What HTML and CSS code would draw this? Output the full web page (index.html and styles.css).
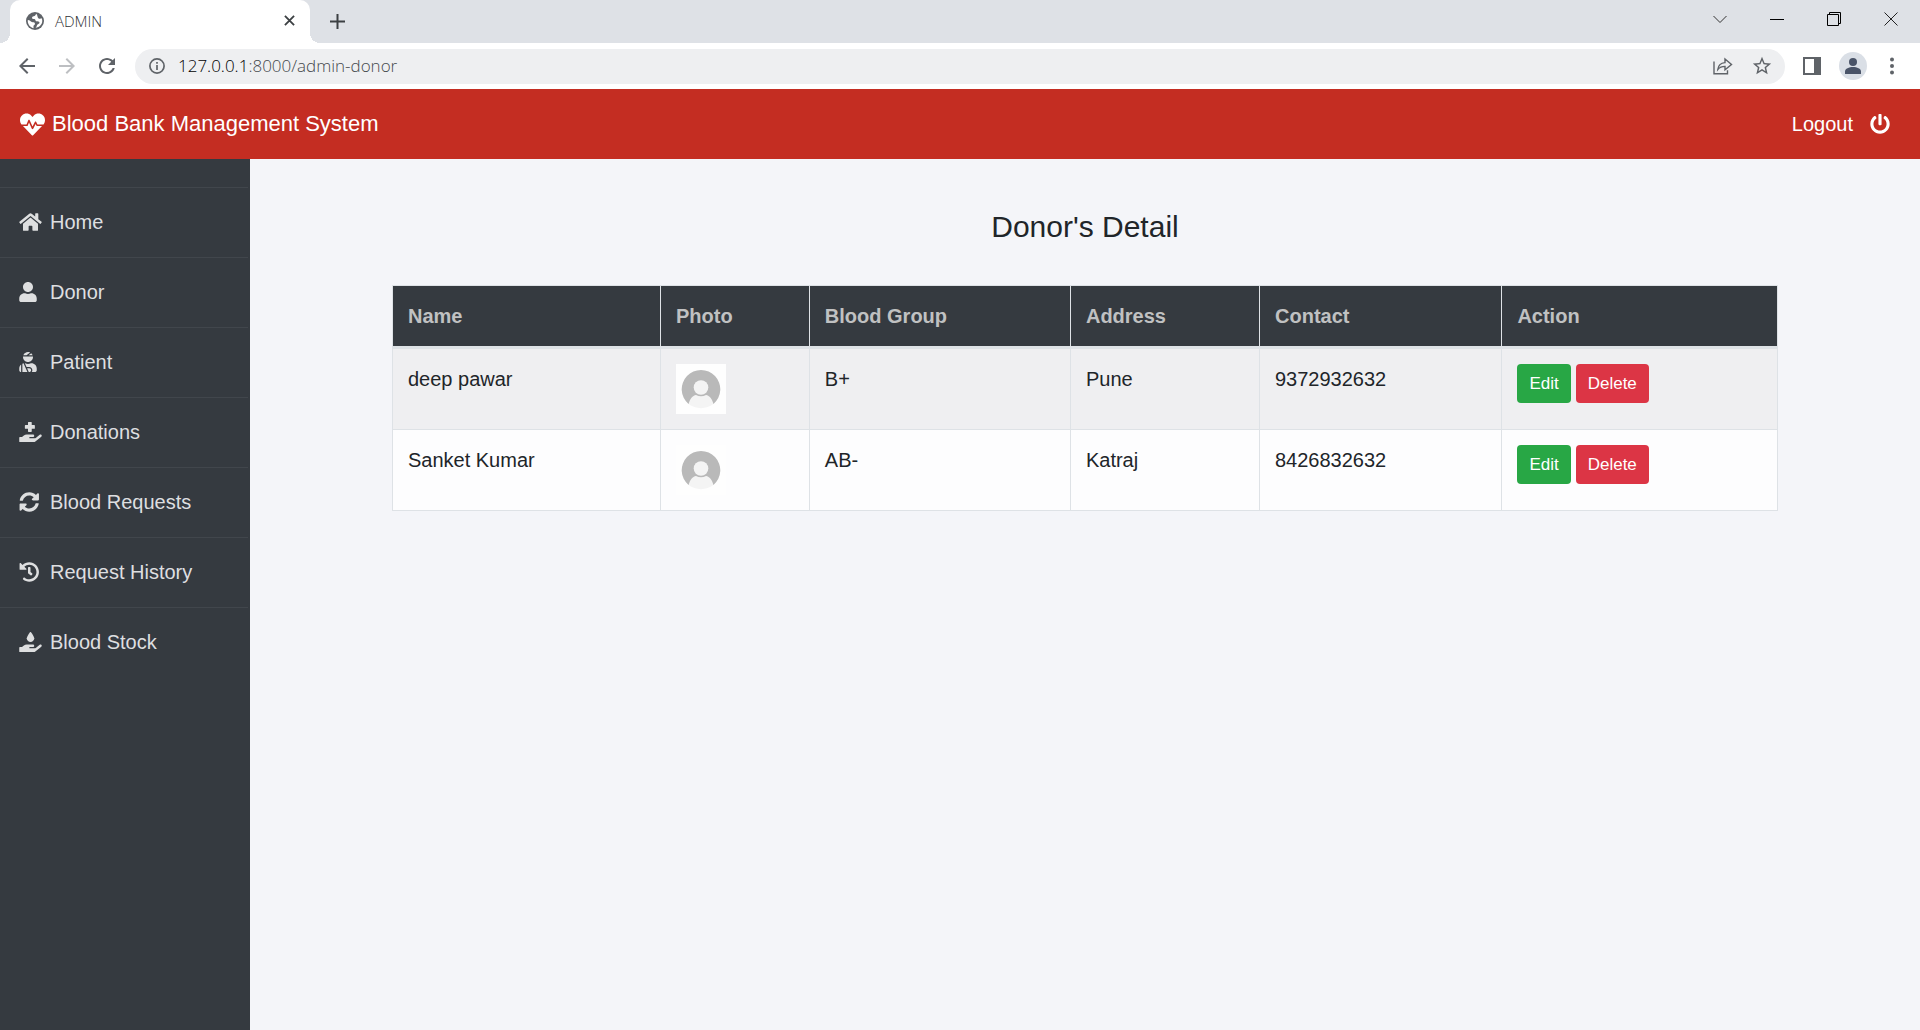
FILE: index.html
```html
<!DOCTYPE html>
<html lang="en">
<head>
<meta charset="utf-8">
<meta name="viewport" content="width=device-width, initial-scale=1">
<title>ADMIN</title>
<link rel="stylesheet" href="styles.css">
</head>
<body>
<div class="browser">
  <div class="tabstrip">
    <div class="tab">
      <svg class="tab-globe" viewBox="0 0 24 24"><circle cx="12" cy="12" r="12" fill="#5f6368"/><path fill="#fff" d="M13.500 2.300c-.8 1.300-.6 2.300-2.100 3-1.600.7-3.200.6-3.400 2.300-.2 1.500 1.500 1.500 3 1.800 1.800.3 1.200 2.300 2.700 2.900 1.800.7 4-.3 4.300 1.800.2 1.500-2 1.700-3 3-.9 1.200-.4 3-2.300 3.900 5-.1 9-4.100 9-9.200 0-1.200-.3-2.300-.8-3.400-1.300.7-2.900.8-4.100.1-1.900-1.200-1-4.700-3.300-6.200zM2.400 10.700c-.6 5.200 2.700 9.800 7.600 10.800.3-1.600-.5-2.700.6-3.800.8-.9 1.700-1.300 1.200-2.800-.5-1.400-2.400-.8-4-1.500-1.700-.7-2.700-2.700-5.400-2.700z"/></svg>
      <span class="tab-title">ADMIN</span>
      <button class="icon-btn" aria-label="Close tab"><svg class="i-close" viewBox="0 0 12 12"><path d="M1 1l10 10M11 1L1 11" stroke="#3c4043" stroke-width="2"/></svg></button>
    </div>
    <button class="icon-btn new-tab" aria-label="New tab"><svg class="i-plus" viewBox="0 0 15 15"><path d="M7.500 0v15M0 7.500h15" stroke="#3c4043" stroke-width="2"/></svg></button>
    <div class="window-controls">
      <button class="icon-btn" aria-label="Search tabs"><svg class="i-win" viewBox="0 0 14 14"><path d="M.5 4l6.500 6.500L13.500 4" fill="none" stroke="#333"/></svg></button>
      <button class="icon-btn" aria-label="Minimize"><svg class="i-win" viewBox="0 0 14 14"><path d="M0 7.500h14" stroke="#000"/></svg></button>
      <button class="icon-btn" aria-label="Restore"><svg class="i-win" viewBox="0 0 14 14"><path d="M.5 2.500h11v11H.5zM2.500 2.500v-2h11v11h-2" fill="none" stroke="#000"/></svg></button>
      <button class="icon-btn" aria-label="Close window"><svg class="i-win" viewBox="0 0 14 14"><path d="M.5.5l13 13M13.500.5l-13 13" stroke="#222"/></svg></button>
    </div>
  </div>
  <div class="toolbar">
    <button class="icon-btn" aria-label="Back"><svg class="i-nav" viewBox="0 0 24 24"><path fill="#5f6368" d="M20 11H7.830l5.590-5.590L12 4l-8 8 8 8 1.410-1.410L7.830 13H20v-2z"/></svg></button>
    <button class="icon-btn" aria-label="Forward"><svg class="i-nav" viewBox="0 0 24 24"><path fill="#bdbfc2" d="M12 4l-1.410 1.410L16.170 11H4v2h12.170l-5.580 5.590L12 20l8-8z"/></svg></button>
    <button class="icon-btn" aria-label="Reload"><svg class="i-nav" viewBox="0 0 24 24"><path fill="#5f6368" d="M17.650 6.350C16.200 4.900 14.210 4 12 4c-4.420 0-7.990 3.580-7.990 8s3.570 8 7.990 8c3.730 0 6.840-2.550 7.730-6h-2.080c-.82 2.330-3.040 4-5.650 4-3.310 0-6-2.690-6-6s2.690-6 6-6c1.660 0 3.140.69 4.220 1.780L13 11h7V4l-2.350 2.350z"/></svg></button>
    <div class="address">
      <svg class="i-info" viewBox="0 0 16 16"><circle cx="8" cy="8" r="7.100" fill="none" stroke="#5f6368" stroke-width="1.700"/><path d="M8 7v5M8 4v1.700" stroke="#5f6368" stroke-width="1.700"/></svg>
      <span class="url"><span class="host">127.0.0.1</span>:8000/admin-donor</span>
      <button class="icon-btn" aria-label="Share"><svg class="i-share" viewBox="0 0 20 18"><path d="M1 4.500v12.300h13.500v-3.500M4.800 12.500c.5-4.600 3.300-6.600 7.200-6.900V2l6.500 5.500-6.500 5.300V9.400c-3 0-5.300.8-7.200 3.100z" fill="none" stroke="#5f6368" stroke-width="1.400"/></svg></button>
      <button class="icon-btn" aria-label="Bookmark"><svg class="i-star" viewBox="0 0 24 24"><path fill="#5f6368" d="M22 9.240l-7.190-.62L12 2 9.190 8.630 2 9.240l5.460 4.730L5.820 21 12 17.270 18.180 21l-1.630-7.030L22 9.240zM12 15.400l-3.760 2.270 1-4.280-3.320-2.880 4.380-.38L12 6.100l1.710 4.040 4.380.38-3.320 2.880 1 4.280L12 15.400z"/></svg></button>
    </div>
    <div class="toolbar-end">
      <button class="icon-btn" aria-label="Side panel"><svg class="i-panel" viewBox="0 0 18 18"><path fill="#5f6368" d="M0 0h18v18H0zM2 2v14h9V2z" fill-rule="evenodd"/></svg></button>
      <button class="icon-btn" aria-label="Profile"><svg class="i-profile" viewBox="0 0 28 28"><circle cx="14" cy="14" r="14" fill="#dadfe6"/><circle cx="14" cy="10" r="4" fill="#4a5468"/><path fill="#4a5468" d="M6 22v-2.500c0-3 4-4.500 8-4.500s8 1.500 8 4.500V22z"/></svg></button>
      <button class="icon-btn" aria-label="Menu"><svg class="i-dots" viewBox="0 0 14 18"><g fill="#5f6368"><circle cx="7" cy="2.500" r="2"/><circle cx="7" cy="9" r="2"/><circle cx="7" cy="15.500" r="2"/></g></svg></button>
    </div>
  </div>
</div>

<header class="header">
  <a class="brand" href="#">
    <svg class="i-heart" viewBox="0 0 512 512"><path d="M320.200 243.800l-49.700 99.400c-6 12.100-23.400 11.700-28.900-.6l-56.900-126.300-30 71.700H60.600l182.500 186.500c7.100 7.300 18.600 7.300 25.700 0L451.400 288H342.300l-22.100-44.200zM473.700 73.900l-2.400-2.500c-51.500-52.600-135.800-52.600-187.400 0L256 100l-27.900-28.500c-51.500-52.700-135.900-52.700-187.400 0l-2.400 2.400C-10.400 123.700-12.500 203 31 256h102.400l35.900-86.200c5.400-12.900 23.600-13.100 29.300-.2l58 128.900 47.200-94.300c5.900-11.800 22.700-11.800 28.600 0l26.100 51.800H481c43.500-53 41.400-132.300-7.300-182.100z"/></svg>
    <span>Blood Bank Management System</span>
  </a>
  <a class="logout" href="#">
    <span>Logout</span>
    <svg class="i-power" viewBox="0 0 512 512"><path d="M400 54.100c63 45 104 118.600 104 201.900 0 136.800-110.800 247.700-247.500 248C120 504.300 8.200 393 8 256.400 7.900 173.100 48.900 99.300 111.800 54.200c11.700-8.300 28-4.800 35 7.700L162.600 90c5.900 10.500 3.100 23.800-6.600 31-41.500 30.800-68 79.600-68 134.900-.1 92.300 74.500 168.100 168 168.100 91.600 0 168.600-74.200 168-169.100-.3-51.800-24.700-101.800-68.100-134-9.700-7.200-12.400-20.500-6.500-30.900l15.800-28.100c7-12.400 23.200-16.100 34.800-7.800zM296 264V24c0-13.300-10.700-24-24-24h-32c-13.300 0-24 10.700-24 24v240c0 13.300 10.700 24 24 24h32c13.300 0 24-10.700 24-24z"/></svg>
  </a>
</header>

<div class="layout">
  <nav class="sidebar">
    <ul class="menu">
      <li><a href="#"><svg viewBox="0 0 576 512"><path d="M280.370 148.260L96 300.110V464a16 16 0 0 0 16 16l112.060-.29a16 16 0 0 0 15.920-16V368a16 16 0 0 1 16-16h64a16 16 0 0 1 16 16v95.640a16 16 0 0 0 16 16.050L464 480a16 16 0 0 0 16-16V300L295.670 148.260a12.190 12.190 0 0 0-15.300 0zM571.600 251.470L488 182.560V44.050a12 12 0 0 0-12-12h-56a12 12 0 0 0-12 12v72.610L318.470 43a48 48 0 0 0-61 0L4.340 251.470a12 12 0 0 0-1.600 16.900l25.500 31A12 12 0 0 0 45.150 301l235.220-193.740a12.190 12.190 0 0 1 15.300 0L530.900 301a12 12 0 0 0 16.900-1.600l25.500-31a12 12 0 0 0-1.700-16.930z"/></svg><span>Home</span></a></li>
      <li><a href="#"><svg viewBox="0 0 576 512"><path d="M224 256c70.700 0 128-57.300 128-128S294.700 0 224 0 96 57.300 96 128s57.300 128 128 128zm89.600 32h-16.700c-22.200 10.200-46.900 16-72.900 16s-50.600-5.800-72.900-16h-16.700C60.200 288 0 348.200 0 422.400V464c0 26.500 21.500 48 48 48h352c26.500 0 48-21.500 48-48v-41.600c0-74.200-60.200-134.400-134.400-134.400z"/></svg><span>Donor</span></a></li>
      <li><a href="#"><svg viewBox="0 0 576 512"><path d="M277.370 11.980C261.080 4.470 243.110 0 224 0c-53.690 0-99.500 33.130-118.510 80h81.190l90.690-68.020zM342.510 80c-7.900-19.470-20.670-36.200-36.490-49.520L239.990 80h102.520zM224 256c70.690 0 128-57.310 128-128 0-5.480-.95-10.700-1.610-16H97.610c-.67 5.300-1.610 10.520-1.610 16 0 70.690 57.310 128 128 128zM80 299.700V512h128.260l-98.450-221.520A132.835 132.835 0 0 0 80 299.700zM0 464c0 26.510 21.490 48 48 48V320.240C18.880 344.890 0 381.260 0 422.400V464zm256-48h-55.380l42.670 96H256c26.470 0 48-21.530 48-48s-21.530-48-48-48zm57.600-128h-16.710c-22.240 10.180-46.880 16-72.890 16s-50.650-5.820-72.890-16h-7.370l42.670 96H256c44.110 0 80 35.890 80 80 0 18.080-6.260 34.590-16.410 48H400c26.510 0 48-21.490 48-48v-41.600c0-74.230-60.170-134.400-134.400-134.400z"/></svg><span>Patient</span></a></li>
      <li><a href="#"><svg viewBox="0 0 576 512"><path d="M159.880 175.820h64v64a16 16 0 0 0 16 16h64a16 16 0 0 0 16-16v-64h64a16 16 0 0 0 16-16v-64a16 16 0 0 0-16-16h-64v-64a16 16 0 0 0-16-16h-64a16 16 0 0 0-16 16v64h-64a16 16 0 0 0-16 16v64a16 16 0 0 0 16 16z"/><path d="M565.300 328.100c-11.800-10.700-30.200-10-42.600 0L430.300 402c-11.300 9.100-25.400 14-40 14H272c-8.800 0-16-7.200-16-16s7.200-16 16-16h78.300c15.900 0 30.700-10.900 33.300-26.600 3.300-20-12.100-37.400-31.600-37.400H192c-27 0-53.100 9.300-74.100 26.300L71.400 384H16c-8.800 0-16 7.200-16 16v96c0 8.800 7.200 16 16 16h356.800c14.500 0 28.600-4.900 40-14L564 377c15.200-12.100 16.400-35.300 1.300-48.900z"/></svg><span>Donations</span></a></li>
      <li><a href="#"><svg viewBox="0 0 576 512"><path d="M370.720 133.280C339.458 104.008 298.888 87.962 255.848 88c-77.458.068-144.328 53.178-162.791 126.850-1.344 5.363-6.122 9.150-11.651 9.150H24.103c-7.498 0-13.194-6.807-11.807-14.176C33.933 94.924 134.813 8 256 8c66.448 0 126.791 26.136 171.315 68.685L463.030 40.970C478.149 25.851 504 36.559 504 57.941V192c0 13.255-10.745 24-24 24H345.941c-21.382 0-32.090-25.851-16.971-40.971l41.750-41.749zM32 296h134.059c21.382 0 32.090 25.851 16.971 40.971l-41.750 41.750c31.262 29.273 71.835 45.319 114.876 45.280 77.418-.07 144.315-53.144 162.787-126.849 1.344-5.363 6.122-9.150 11.651-9.150h57.304c7.498 0 13.194 6.807 11.807 14.176C478.067 417.076 377.187 504 256 504c-66.448 0-126.791-26.136-171.315-68.685L48.970 471.030C33.851 486.149 8 475.441 8 454.059V320c0-13.255 10.745-24 24-24z"/></svg><span>Blood Requests</span></a></li>
      <li><a href="#"><svg viewBox="0 0 576 512"><path d="M504 255.531c.253 136.640-111.180 248.372-247.820 248.468-59.015.042-113.223-20.530-155.822-54.911-11.077-8.940-11.905-25.541-1.839-35.607l11.267-11.267c8.609-8.609 22.353-9.551 31.891-1.984C173.062 425.135 212.781 440 256 440c101.705 0 184-82.311 184-184 0-101.705-82.311-184-184-184-48.814 0-93.149 18.969-126.068 49.932l50.754 50.754c10.080 10.080 2.941 27.314-11.313 27.314H24c-8.837 0-16-7.163-16-16V38.627c0-14.254 17.234-21.393 27.314-11.314l49.372 49.372C129.209 34.136 189.552 8 256 8c136.810 0 247.747 110.780 248 247.531zm-180.912 78.784l9.823-12.630c8.138-10.463 6.253-25.542-4.210-33.679L288 256.349V152c0-13.255-10.745-24-24-24h-16c-13.255 0-24 10.745-24 24v135.651l65.409 50.874c10.463 8.137 25.541 6.253 33.679-4.210z"/></svg><span>Request History</span></a></li>
      <li><a href="#"><svg viewBox="0 0 576 512"><path d="M288 256c53 0 96-42.100 96-94 0-40-57.100-120.700-83.200-155.600-6.400-8.500-19.200-8.500-25.600 0C249.100 41.300 192 122 192 162c0 51.900 43 94 96 94z"/><path d="M565.300 328.100c-11.800-10.700-30.200-10-42.600 0L430.300 402c-11.300 9.100-25.400 14-40 14H272c-8.800 0-16-7.200-16-16s7.200-16 16-16h78.300c15.900 0 30.700-10.900 33.300-26.600 3.300-20-12.100-37.400-31.600-37.400H192c-27 0-53.100 9.300-74.100 26.300L71.400 384H16c-8.800 0-16 7.200-16 16v96c0 8.800 7.200 16 16 16h356.800c14.500 0 28.600-4.900 40-14L564 377c15.200-12.100 16.400-35.300 1.300-48.900z"/></svg><span>Blood Stock</span></a></li>
    </ul>
  </nav>

  <main class="content">
    <h1 class="title">Donor's Detail</h1>
    <table class="donors">
      <colgroup><col class="c-name"><col class="c-photo"><col class="c-group"><col class="c-address"><col class="c-contact"><col class="c-action"></colgroup>
      <thead>
        <tr><th scope="col">Name</th><th scope="col">Photo</th><th scope="col">Blood Group</th><th scope="col">Address</th><th scope="col">Contact</th><th scope="col">Action</th></tr>
      </thead>
      <tbody>
        <tr>
          <td>deep pawar</td>
          <td><svg class="photo" viewBox="0 0 50 50"><path fill="#b9b9b9" d="M12.500 40a19.300 19.300 0 1 1 25 0z"/><circle cx="25" cy="23.500" r="7.300" fill="#f4f4f4"/><path fill="#f4f4f4" d="M12.500 40c1.500-5 4-8.500 7.500-9 3 1.700 7 1.700 10 0 3.500.5 6 4 7.500 9-7 5.500-18 5.500-25 0z"/></svg></td>
          <td>B+</td><td>Pune</td><td>9372932632</td>
          <td><div class="actions"><button class="btn edit">Edit</button><button class="btn delete">Delete</button></div></td>
        </tr>
        <tr>
          <td>Sanket Kumar</td>
          <td><svg class="photo" viewBox="0 0 50 50"><path fill="#b9b9b9" d="M12.500 40a19.300 19.300 0 1 1 25 0z"/><circle cx="25" cy="23.500" r="7.300" fill="#f4f4f4"/><path fill="#f4f4f4" d="M12.500 40c1.500-5 4-8.500 7.500-9 3 1.700 7 1.700 10 0 3.500.5 6 4 7.500 9-7 5.500-18 5.500-25 0z"/></svg></td>
          <td>AB-</td><td>Katraj</td><td>8426832632</td>
          <td><div class="actions"><button class="btn edit">Edit</button><button class="btn delete">Delete</button></div></td>
        </tr>
      </tbody>
    </table>
  </main>
</div>
</body>
</html>
```
FILE: styles.css
```css
* { box-sizing: border-box; }

body {
  margin: 0;
  min-height: 100vh;
  display: flex;
  flex-direction: column;
  font: 20px/30px "Liberation Sans", Arial, sans-serif;
  color: #212529;
  background: #f4f5f9;
}

svg { display: block; flex: none; }
a { color: inherit; text-decoration: none; }
button { font: inherit; border: 0; cursor: pointer; }
.icon-btn { display: flex; padding: 0; background: none; }

/* Browser frame */
.browser {
  font-family: "Open Sans", "Segoe UI", sans-serif;
  background: #fff;
}
.tabstrip {
  display: flex;
  align-items: center;
  height: 43px;
  padding: 0 22px 0 10px;
  background: #dee1e6;
}
.tab {
  position: relative;
  display: flex;
  align-items: center;
  width: 300px;
  height: 43px;
  padding: 0 15px 2px 16px;
  background: #fff;
  border-radius: 10px 10px 0 0;
}
.tab::before,
.tab::after {
  content: "";
  position: absolute;
  bottom: 0;
  width: 10px;
  height: 10px;
}
.tab::before { left: -10px; background: radial-gradient(circle at 0 0, transparent 10px, #fff 10px); }
.tab::after { right: -10px; background: radial-gradient(circle at 100% 0, transparent 10px, #fff 10px); }
.tab-globe { width: 18px; height: 18px; }
.tab-title {
  flex: 1;
  padding-left: 11px;
  font-size: 15px;
  font-weight: 300;
  color: #303336;
}
.i-close { width: 11px; height: 11px; }
.i-plus { width: 15px; height: 15px; }
.new-tab { margin-left: 20px; }
.window-controls { display: flex; gap: 43px; margin: 0 0 6px auto; }
.i-win { width: 14px; height: 14px; }

.toolbar {
  display: flex;
  align-items: center;
  gap: 16px;
  height: 46px;
  padding: 0 21px 0 15px;
}
.toolbar-end { display: flex; align-items: center; gap: 18px; padding-left: 2px; }
.i-nav { width: 24px; height: 24px; }
.address {
  flex: 1;
  display: flex;
  align-items: center;
  height: 35px;
  padding: 0 12px 0 14px;
  border-radius: 18px;
  background: #eeeff1;
}
.i-info { width: 16px; height: 16px; }
.url {
  flex: 1;
  padding-left: 13px;
  font-size: 17px;
  font-weight: 300;
  color: #45494d;
}
.host { color: #000; }
.i-share { width: 20px; height: 18px; }
.i-star { width: 22px; height: 22px; margin-left: 18px; }
.i-panel { width: 18px; height: 18px; }
.i-profile { width: 28px; height: 28px; }
.i-dots { width: 14px; height: 18px; }

/* Site header */
.header {
  display: flex;
  align-items: center;
  justify-content: space-between;
  height: 70px;
  padding: 0 30px 0 20px;
  color: #fff;
  background: #c42d22;
}
.header svg { fill: #fff; }
.brand { display: flex; align-items: center; gap: 7px; font-size: 22px; }
.i-heart { width: 25px; height: 25px; }
.logout { display: flex; align-items: center; gap: 17px; }
.i-power { width: 20px; height: 20px; }

/* Sidebar and content */
.layout { flex: 1; display: flex; }
.sidebar {
  flex: none;
  width: 250px;
  padding: 28px 2px 0 0;
  color: #dedfe0;
  background: #353a40;
}
.menu { margin: 0; padding: 0; list-style: none; }
.menu li { border-top: 1px solid #41464c; }
.menu a {
  display: flex;
  align-items: center;
  gap: 8px;
  height: 69px;
  padding: 0 0 2px 19px;
}
.menu svg { width: 23px; height: 20px; fill: #dedfe0; }

.content {
  flex: 1;
  display: flex;
  flex-direction: column;
  align-items: center;
  gap: 40px;
  padding-top: 50px;
}
.title { margin: 0; font-size: 30px; line-height: 36px; font-weight: 400; }

.donors {
  width: 83%;
  table-layout: fixed;
  border-collapse: collapse;
  background: #fdfdfe;
}
.c-name { width: 19.35%; }
.c-photo { width: 10.75%; }
.c-group { width: 18.85%; }
.c-address { width: 13.65%; }
.c-contact { width: 17.5%; }
.c-action { width: 19.9%; }
.donors th,
.donors td {
  padding: 15px;
  border: 1px solid #dee2e6;
  text-align: left;
  vertical-align: top;
}
.donors th {
  border-bottom-width: 3px;
  color: #c0c1c2;
  background: #353a40;
}
.donors tbody tr:nth-child(odd) { background: #efeff1; }
.photo { width: 50px; height: 50px; background: #fefefe; }
.actions { display: flex; gap: 5px; }
.btn {
  height: 39px;
  padding: 0 12px;
  border-radius: 4px;
  font-size: 17px;
  color: #fff;
}
.edit { background: #28a745; }
.delete { background: #dc3545; }
```
